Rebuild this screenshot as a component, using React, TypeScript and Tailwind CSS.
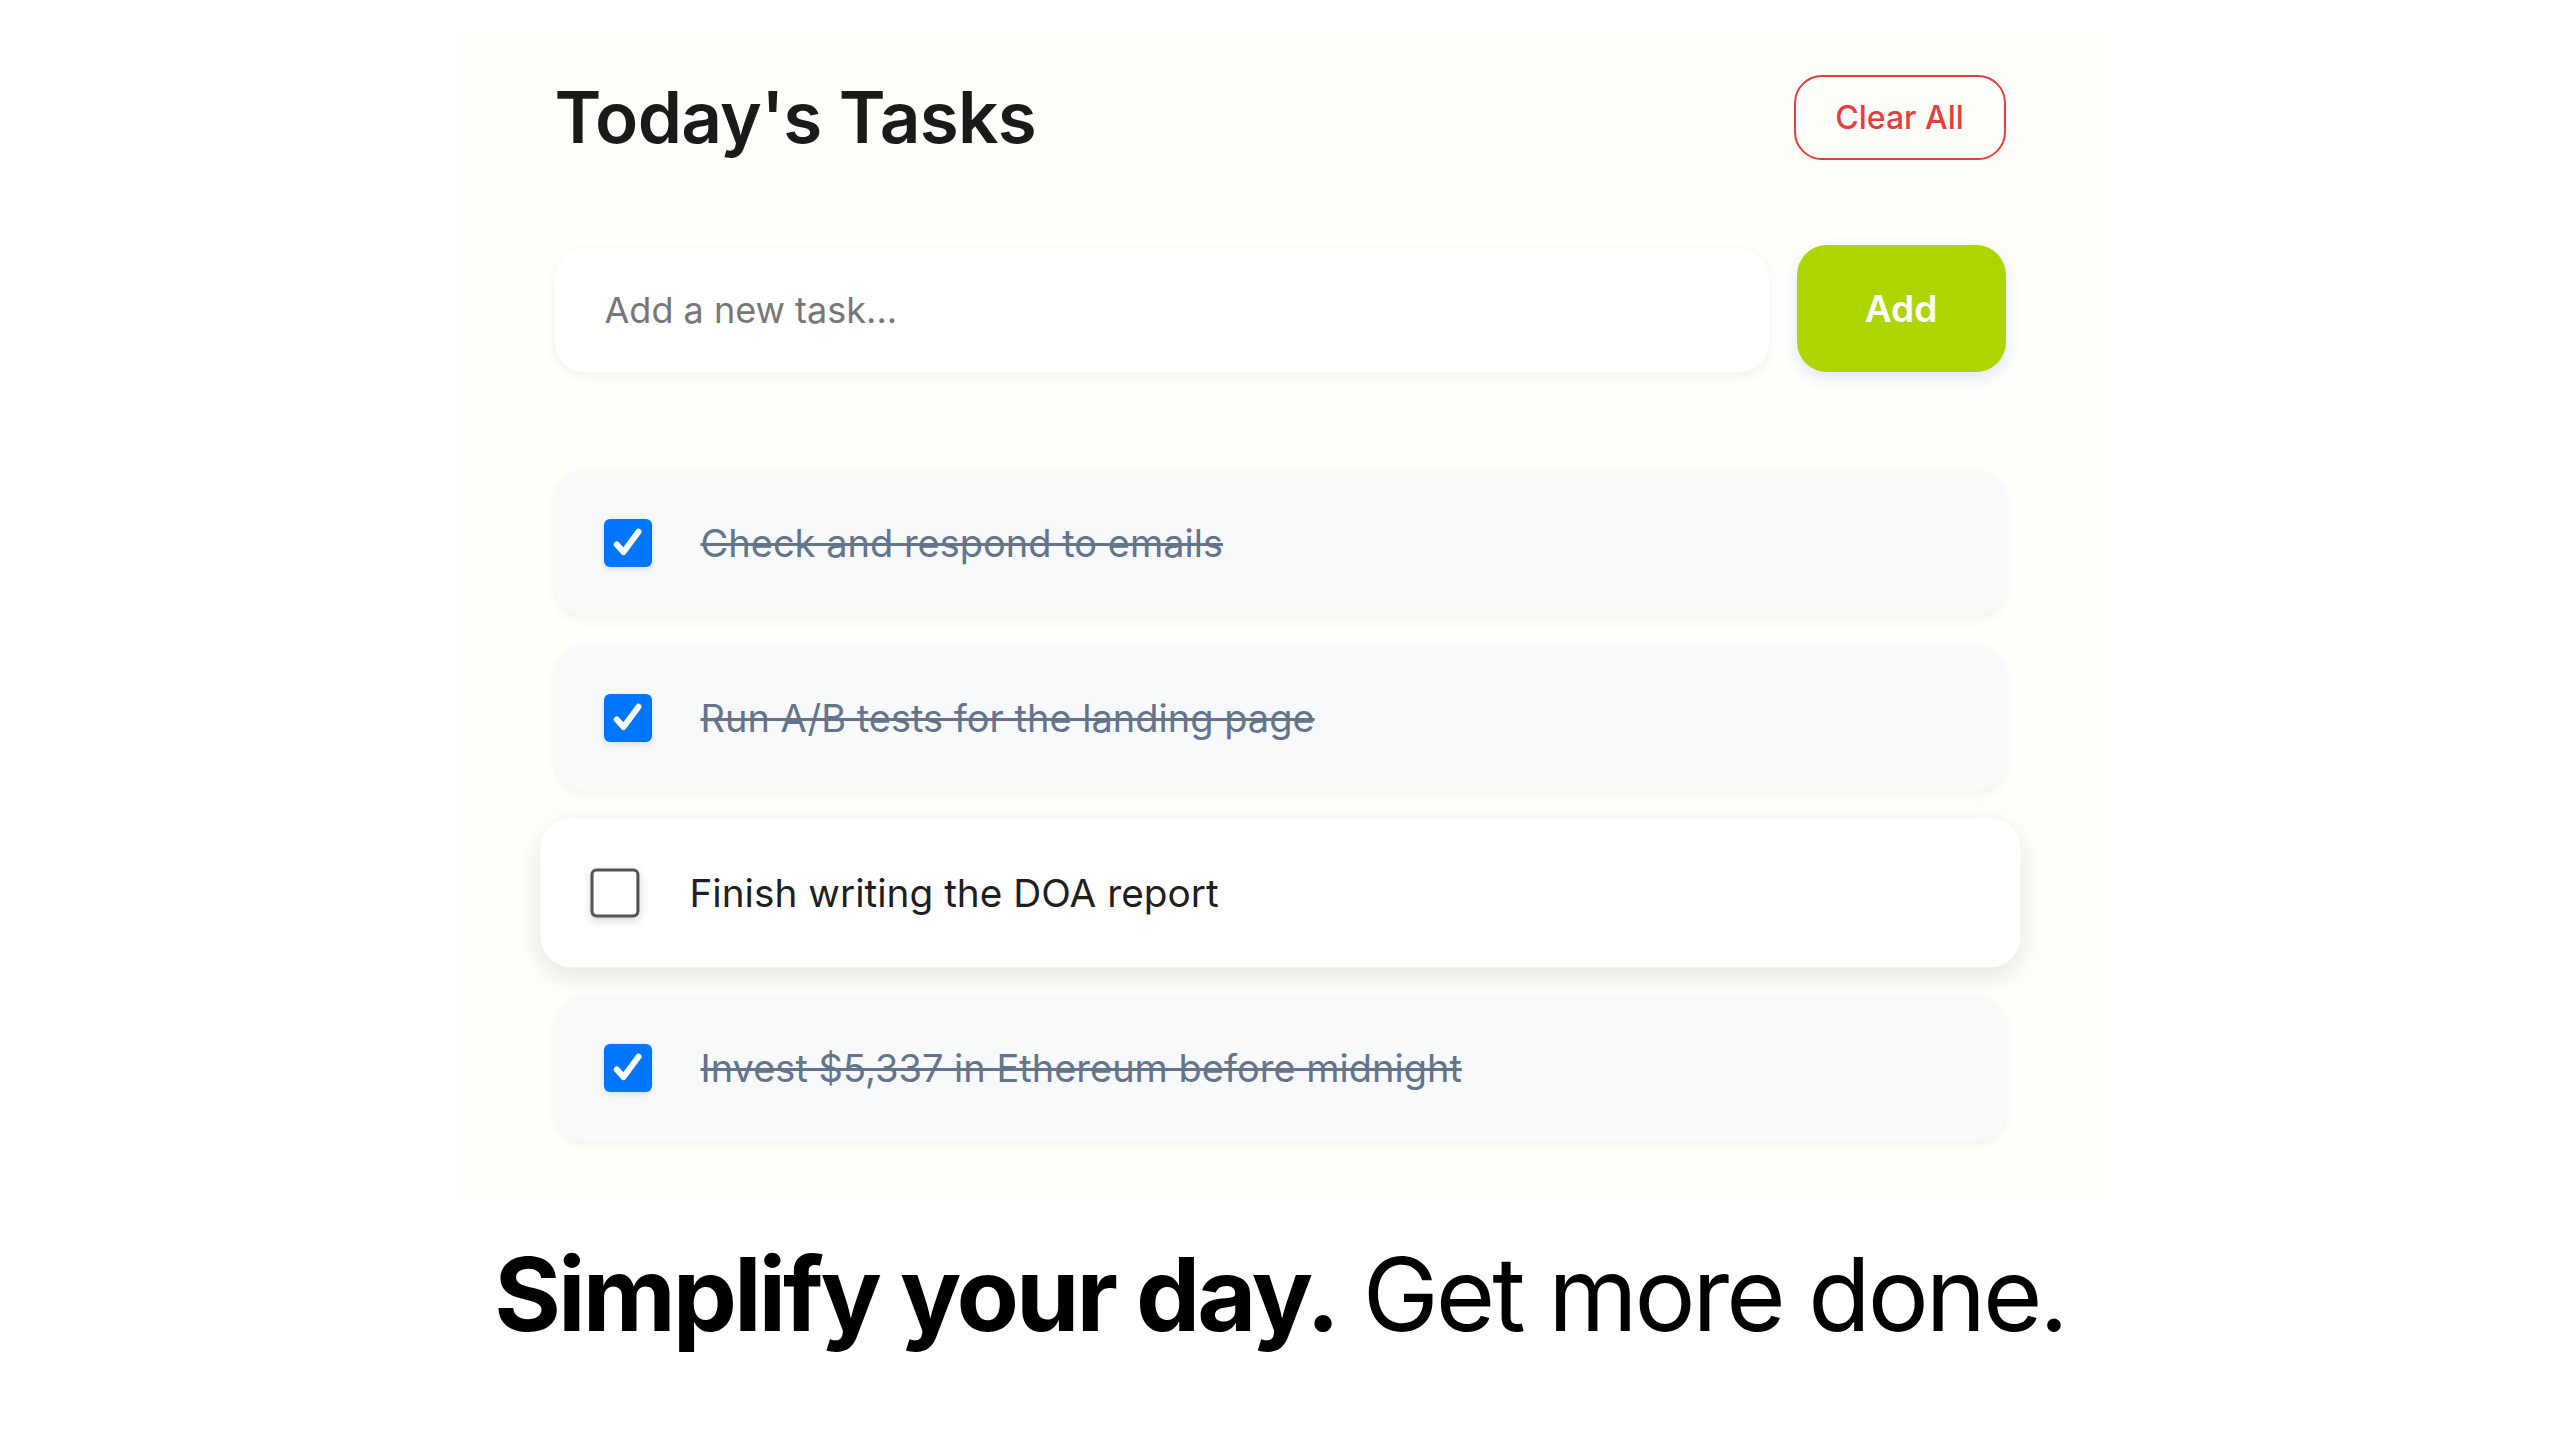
import React, { useState } from 'react';

interface Task {
  id: number;
  text: string;
  done: boolean;
}

const initialTasks: Task[] = [
  { id: 1, text: 'Check and respond to emails', done: true },
  { id: 2, text: 'Run A/B tests for the landing page', done: true },
  { id: 3, text: 'Finish writing the DOA report', done: false },
  { id: 4, text: 'Invest $5,337 in Ethereum before midnight', done: true },
];

const CheckBox: React.FC<{ checked: boolean }> = ({ checked }) =>
  checked ? (
    <div className="w-[48px] h-[48px] rounded-[6px] bg-[#0076ff] flex items-center justify-center shadow-[0_2px_6px_rgba(0,0,0,0.12)] shrink-0">
      <svg width="36" height="36" viewBox="0 0 24 24" fill="none">
        <path d="M4.5 13l4.5 5L19 4.5" stroke="white" strokeWidth="4" strokeLinecap="round" strokeLinejoin="round" />
      </svg>
    </div>
  ) : (
    <div className="w-[48px] h-[48px] rounded-[6px] bg-white border-[3px] border-[#555] shadow-[0_3px_8px_rgba(0,0,0,0.15)] shrink-0" />
  );

const App: React.FC = () => {
  const [tasks] = useState<Task[]>(initialTasks);

  return (
    <div className="w-full h-[1440px] bg-white flex flex-col items-center font-['Inter',sans-serif]">
      <div className="mt-[32px] w-[1651px] bg-[#fefefb] px-[100px] pt-[43px] pb-[60px]">
        <div className="flex items-center justify-between h-[85px]">
          <h1 className="text-[71px] font-semibold text-[#1a1a1a] tracking-[-0.01em] leading-none">Today's Tasks</h1>
          <button className="w-[212px] h-[85px] rounded-[28px] border-2 border-[#e53e3e] text-[#e53e3e] text-[32px] font-medium">
            Clear All
          </button>
        </div>

        <div className="flex mt-[85px] gap-[28px]">
          <div className="flex-1 h-[124px] mt-[3px] bg-white rounded-[30px] shadow-[0_4px_14px_rgba(0,0,0,0.06)] flex items-center px-[50px]">
            <span className="text-[36px] text-[#777]">Add a new task...</span>
          </div>
          <button className="w-[209px] h-[127px] rounded-[30px] bg-[#add500] text-white text-[37px] font-semibold shadow-[0_6px_16px_rgba(90,120,220,0.18)]">
            Add
          </button>
        </div>

        <div className="mt-[98px] flex flex-col gap-[29px]">
          {tasks.map(t =>
            t.done ? (
              <div key={t.id} className="h-[146px] rounded-[30px] bg-[#f8f9fb] shadow-[0_4px_12px_rgba(0,0,0,0.05)] flex items-center px-[49px] gap-[49px]">
                <CheckBox checked />
                <span className="text-[38px] text-[#64748b] line-through decoration-[3px] decoration-[#64748b]">{t.text}</span>
              </div>
            ) : (
              <div key={t.id} className="h-[146px] rounded-[30px] bg-white shadow-[0_8px_28px_rgba(0,0,0,0.10)] flex items-center px-[49px] gap-[49px] scale-[1.02]">
                <CheckBox checked={false} />
                <span className="text-[38px] text-[#1f1f1f]">{t.text}</span>
              </div>
            )
          )}
        </div>
      </div>

      <p className="mt-[42px] text-[102px] leading-none text-black tracking-[-0.03em]">
        <span className="font-bold">Simplify your day.</span> <span className="font-normal">Get more done.</span>
      </p>
    </div>
  );
};

export default App;
